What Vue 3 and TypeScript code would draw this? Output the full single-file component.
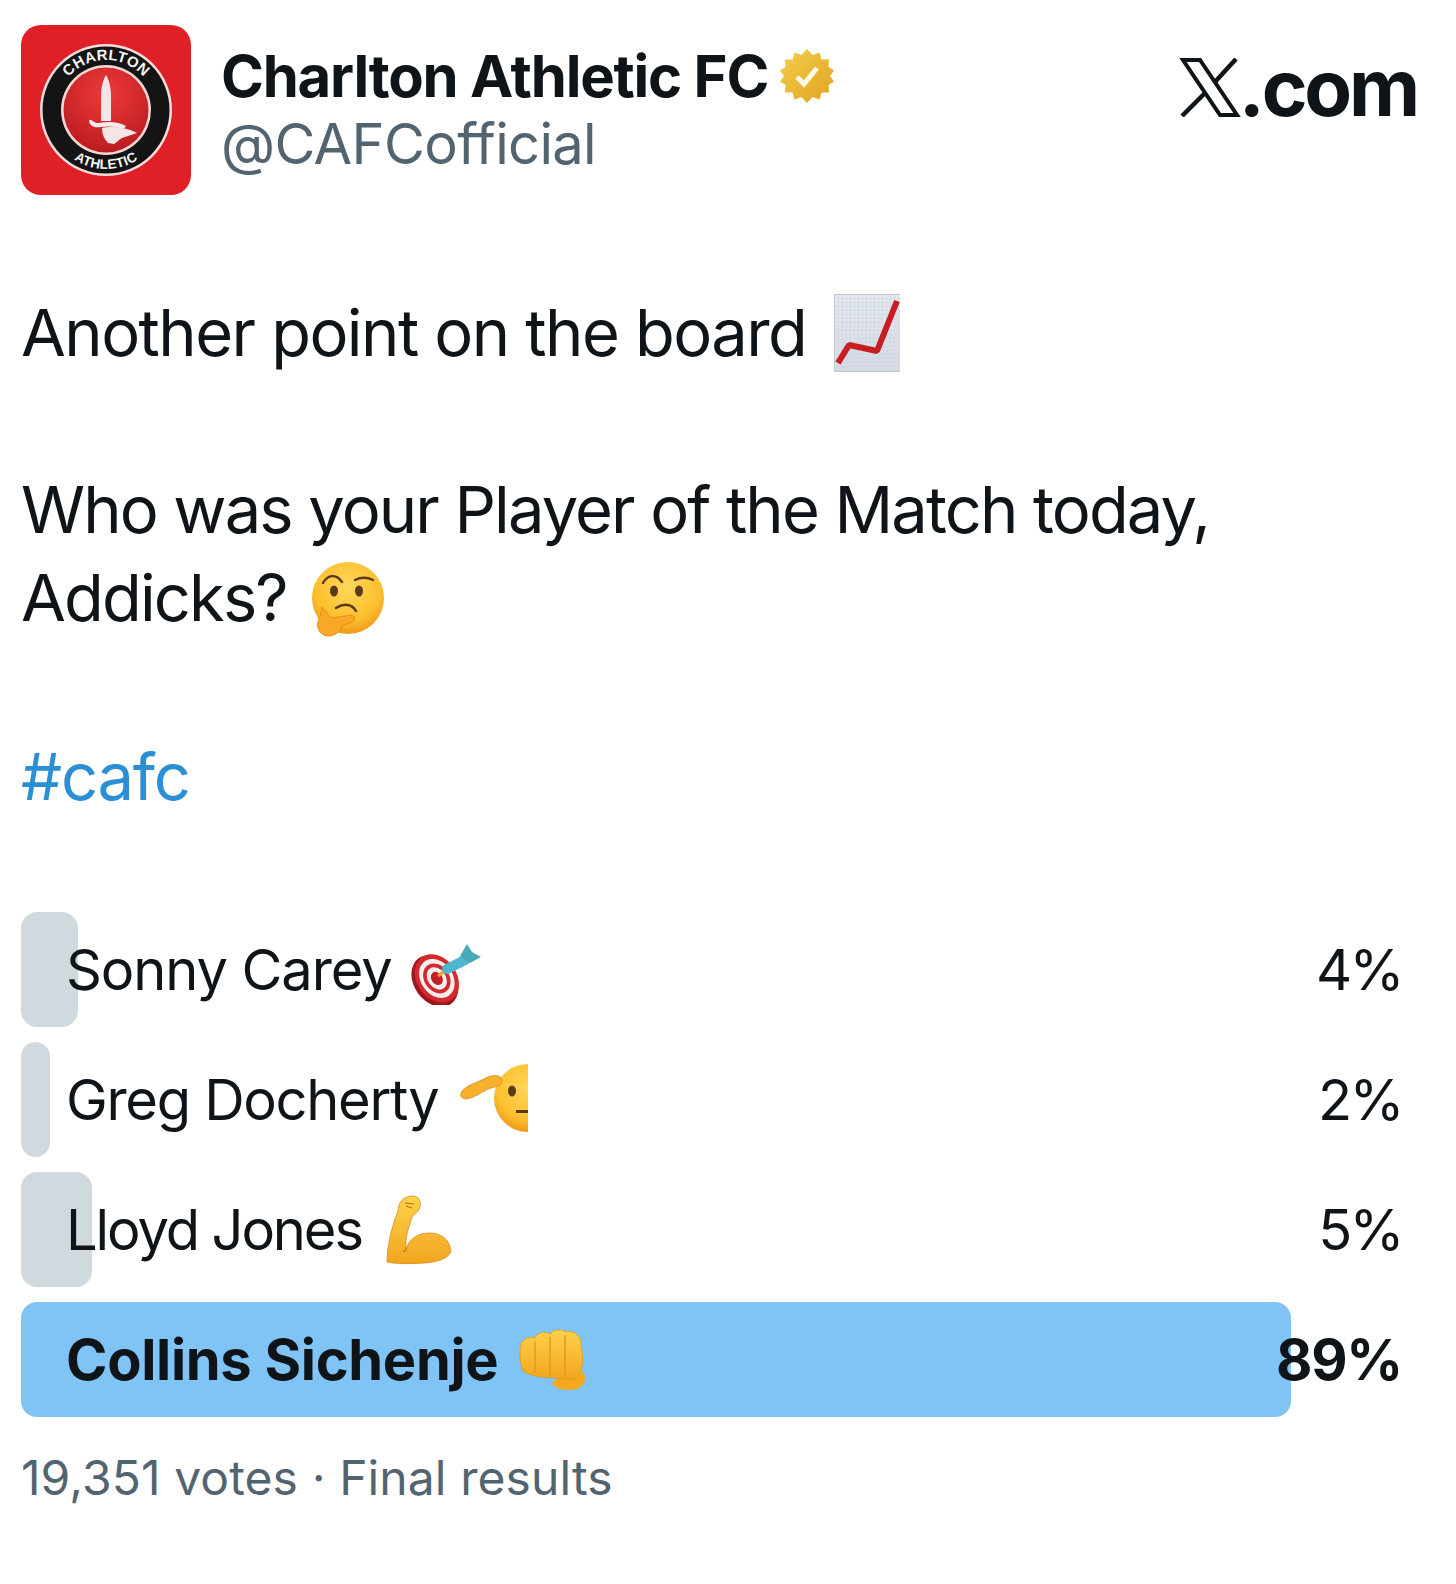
<script setup lang="ts">
interface Option { name: string; pct: string; width: number; icon: string; winner?: boolean }
const options: Option[] = [
  { name: 'Sonny Carey', pct: '4%', width: 57, icon: 'dart' },
  { name: 'Greg Docherty', pct: '2%', width: 29, icon: 'salute' },
  { name: 'Lloyd Jones', pct: '5%', width: 71, icon: 'bicep' },
  { name: 'Collins Sichenje', pct: '89%', width: 1270, icon: 'fist', winner: true },
]
</script>

<template>
  <main class="page">
    <svg class="defs" width="0" height="0" aria-hidden="true">
      <defs>
        <radialGradient id="skin" cx="50%" cy="35%" r="70%">
          <stop offset="0" stop-color="#ffd75a" />
          <stop offset="0.65" stop-color="#fdc02f" />
          <stop offset="1" stop-color="#ee8f14" />
        </radialGradient>
        <linearGradient id="arm" x1="0" y1="0" x2="0" y2="1">
          <stop offset="0" stop-color="#ffd24a" />
          <stop offset="1" stop-color="#f2a51e" />
        </linearGradient>
        <radialGradient id="crestRed" cx="50%" cy="30%" r="75%">
          <stop offset="0" stop-color="#ee3a3a" />
          <stop offset="1" stop-color="#b81a1e" />
        </radialGradient>
        <linearGradient id="gold" x1="0" y1="0" x2="1" y2="1">
          <stop offset="0" stop-color="#f3cf4f" />
          <stop offset="1" stop-color="#e0a21e" />
        </linearGradient>
        <linearGradient id="paper" x1="0" y1="0" x2="0" y2="1">
          <stop offset="0" stop-color="#e4e8ef" />
          <stop offset="1" stop-color="#d6dbe3" />
        </linearGradient>
        <pattern id="grid" width="4" height="4" patternUnits="userSpaceOnUse">
          <path d="M4 0H0V4" fill="none" stroke="#c6cedb" stroke-width="0.7" />
        </pattern>
      </defs>
    </svg>

    <header class="head">
      <svg class="avatar" viewBox="0 0 170 170" width="170" height="170" role="img" aria-label="Charlton Athletic crest">
        <rect width="170" height="170" rx="20" fill="#e02027" />
        <circle cx="85" cy="85" r="66" fill="#f6dcdc" />
        <circle cx="85" cy="85" r="63.5" fill="#141414" />
        <circle cx="85" cy="85" r="45" fill="#f3d6d6" />
        <circle cx="85" cy="85" r="42.5" fill="url(#crestRed)" />
        <path id="arcTop" d="M35 85A50 50 0 0 1 135 85" fill="none" />
        <path id="arcBot" d="M26 85A59 59 0 0 0 144 85" fill="none" />
        <text class="crest-text"><textPath href="#arcTop" startOffset="50%" text-anchor="middle">CHARLTON</textPath></text>
        <text class="crest-text small"><textPath href="#arcBot" startOffset="50%" text-anchor="middle">ATHLETIC</textPath></text>
        <path d="M85 50C88 55 90 62 90 72L90 96H80L80 72C80 62 82 55 85 50Z" fill="#f4e6e6" />
        <path d="M68 96C70 92 72 99 78 98C88 96 98 97 105 101L103 104C94 101 86 101 80 102C75 103 69 102 68 96Z" fill="#f7ecec" />
        <path d="M81 103C90 101 105 102 116 108L101 113L93 119L87 118C83 114 81 109 81 103Z" fill="#f4e6e6" />
      </svg>
      <div class="names">
        <div class="name-line">
          <span class="name">Charlton Athletic FC</span>
          <svg class="badge" viewBox="0 0 54 54" width="54" height="54" aria-hidden="true">
            <path d="M27 0L32.5 6 39.5 3.5 41.5 10.5 49 10.5 48.5 18 54 21.5 50 27 54 32.5 48.5 36 49 43.5 41.5 43.5 39.5 50.5 32.5 48 27 54 21.5 48 14.5 50.5 12.500 43.500 5 43.500 5.500 36 0 32.500 4 27 0 21.500 5.500 18 5 10.500 12.500 10.500 14.500 3.500 21.500 6Z" fill="url(#gold)" />
            <path d="M17 28L24 35 37 19" fill="none" stroke="#fff8e4" stroke-width="5" />
          </svg>
        </div>
        <div class="handle">@CAFCofficial</div>
      </div>
      <div class="brand">
        <svg class="x-logo" viewBox="0 0 62 59" width="62" height="59" aria-hidden="true">
          <path d="M4 2H21L58 57H41Z" fill="none" stroke="#0f1419" stroke-width="4" />
          <path d="M57 1L35 25M27 34L3 58" fill="none" stroke="#0f1419" stroke-width="4.500" />
        </svg>
        <span class="dotcom">.com</span>
      </div>
    </header>

    <section class="tweet">
      <p class="line first">Another point on the board<svg class="emo chart" viewBox="0 0 66 78" width="66" height="78" aria-hidden="true">
          <rect width="66" height="78" fill="url(#paper)" />
          <rect width="66" height="78" fill="url(#grid)" />
          <path d="M66 0H0V78H66" fill="none" stroke="#c4c9d1" stroke-width="2" />
          <path d="M4 69L15 51 43 57 63 7" fill="none" stroke="#c81e22" stroke-width="6" stroke-linejoin="bevel" />
        </svg></p>
      <p class="line second">Who was your Player of the Match today,</p>
      <p class="line third">Addicks?<svg class="emo think" viewBox="0 0 76 78" width="76" height="78" aria-hidden="true">
          <circle cx="39" cy="37" r="36" fill="url(#skin)" />
          <path d="M14 22C19 13 27 13 33 21" fill="none" stroke="#5a3a1a" stroke-width="2.500" stroke-linecap="round" />
          <path d="M46 19C52 16 58 16 64 19" fill="none" stroke="#5a3a1a" stroke-width="2.500" stroke-linecap="round" />
          <ellipse cx="25" cy="30" rx="4" ry="5.500" fill="#5a3a1a" />
          <ellipse cx="50" cy="30" rx="4" ry="5.500" fill="#5a3a1a" />
          <path d="M27 47C35 42 43 43 47 50" fill="none" stroke="#5a3a1a" stroke-width="2.500" stroke-linecap="round" />
          <path d="M13 46C17 49 19 54 22 57L42 54C46 54 47 59 43 61L33 65C32 72 22 77 15 74C8 71 7 62 11 56Z" fill="#f9a825" stroke="#ee8f14" stroke-width="1" />
        </svg></p>
      <p class="line tag">#cafc</p>
    </section>

    <section class="poll">
      <div v-for="o in options" :key="o.name" class="row" :class="[o.icon, { win: o.winner }]">
        <div class="bar" :style="{ width: o.width + 'px' }"></div>
        <div class="row-text">
          <span class="label">{{ o.name }}</span>
          <svg v-if="o.icon === 'dart'" class="emo dart-icon" viewBox="0 0 72 62" width="72" height="62" aria-hidden="true">
            <g transform="rotate(-35 26 36)">
              <ellipse cx="24" cy="37" rx="21" ry="28" fill="#9e161e" />
              <ellipse cx="27" cy="36" rx="20" ry="26" fill="#d42a2f" />
              <ellipse cx="27" cy="36" rx="16" ry="21" fill="#f7eeee" />
              <ellipse cx="27" cy="36" rx="12.500" ry="16" fill="#d42a2f" />
              <ellipse cx="27" cy="36" rx="9" ry="12" fill="#f7eeee" />
              <ellipse cx="27" cy="36" rx="5.500" ry="7" fill="#c41f25" />
            </g>
            <path d="M28 33L36 27" stroke="#f0a030" stroke-width="3" />
            <path d="M37 26L55 17" stroke="#4fb6cf" stroke-width="10" stroke-linecap="round" />
            <path d="M50 13L57 1 62 9 71 14 60 20Z" fill="#4aa9b8" />
          </svg>
          <svg v-else-if="o.icon === 'salute'" class="emo salute-icon" viewBox="0 0 68 68" width="68" height="68" aria-hidden="true">
            <circle cx="68" cy="34" r="34" fill="url(#skin)" />
            <path d="M1 29C4 22 16 19 26 14C33 10 42 11 42 17C42 22 34 23 28 25C20 29 14 34 6 35C2 35 0 32 1 29Z" fill="#f6b02c" stroke="#d88b18" stroke-width="0.800" />
            <ellipse cx="52" cy="27" rx="4" ry="5.500" fill="#5a3a1a" />
            <rect x="56" y="46" width="12" height="3" fill="#5a3a1a" />
          </svg>
          <svg v-else-if="o.icon === 'bicep'" class="emo bicep-icon" viewBox="0 0 66 70" width="66" height="70" aria-hidden="true">
            <path d="M12 16C12 7 18 1 27 1C35 1 36 11 32 16C29 20 26 20 25 25C23 33 19 41 20 53C25 42 33 38 44 38C56 38 64 46 65 56C63 63 53 67 38 68C25 69 10 69 1 67C1 55 4 36 12 16Z" fill="url(#arm)" stroke="#d88b18" stroke-width="0.800" />
            <path d="M20 53C20 55 19 57 17 56" fill="none" stroke="#c97f14" stroke-width="1.500" />
            <path d="M19 8L28 9M20 11L26 13" stroke="#b87514" stroke-width="1.200" />
          </svg>
          <svg v-else class="emo fist-icon" viewBox="0 0 68 62" width="68" height="62" aria-hidden="true">
            <path d="M37 50C45 50 54 52 64 42C68 50 66 56 58 60C48 62 38 61 33 55Z" fill="#f4a91f" />
            <path d="M2 16C3 9 12 7 16 9C18 3 27 2 31 5C34 0 44 0 47 3C55 1 62 7 62 15C64 26 65 38 60 46C55 52 47 51 38 49C25 49 11 47 4 42C1 34 0 24 2 16Z" fill="url(#arm)" stroke="#e09a1c" stroke-width="0.800" />
            <path d="M16 12V44M31 8V47M46 6V48" fill="none" stroke="#e39b1c" stroke-width="1.500" />
          </svg>
        </div>
        <span class="pct">{{ o.pct }}</span>
      </div>
    </section>

    <footer class="foot">19,351 votes · Final results</footer>
  </main>
</template>

<style scoped>
.page {
  width: 1456px;
  height: 1584px;
  box-sizing: border-box;
  padding: 25px 39px 0 21px;
  background: #fff;
  color: #0f1419;
  font-family: Inter, "Liberation Sans", sans-serif;
  overflow: hidden;
}
.defs { position: absolute; }
.head { display: flex; align-items: flex-start; }
.avatar { flex: none; display: block; }
.names { margin-left: 30px; margin-top: 17px; }
.name-line { display: flex; align-items: center; gap: 12px; height: 68px; }
.name { font-size: 58px; font-weight: 700; letter-spacing: -1.2px; line-height: 68px; }
.badge { flex: none; }
.handle { font-size: 56px; line-height: 68px; color: #536471; letter-spacing: -0.65px; }
.brand { margin-left: auto; margin-top: 33px; display: flex; align-items: flex-end; gap: 0; }
.x-logo { display: block; margin-right: -2px; }
.dotcom { font-size: 78px; line-height: 59px; font-weight: 700; letter-spacing: -3.2px; }
.crest-text { font: 700 15px "Liberation Sans", sans-serif; fill: #f3f3f3; letter-spacing: 0.3px; }
.crest-text.small { font-size: 13.5px; }
.tweet { margin-top: 94px; }
.line { margin: 0; font-size: 65px; line-height: 88px; letter-spacing: -1.85px; white-space: nowrap; display: flex; align-items: center; }
.first { letter-spacing: -1.55px; }
.second { margin-top: 89px; }
.tag { margin-top: 91px; color: #2b8fd6; letter-spacing: -1.2px; }
.emo { flex: none; display: block; }
.chart { margin-left: 28px; margin-top: 0; }
.think { margin-left: 22px; margin-top: 4px; }
.poll { margin-top: 91px; display: flex; flex-direction: column; gap: 15px; }
.row { display: grid; grid-template-columns: 1fr auto; align-items: center; height: 115px; width: 1381px; }
.bar { grid-area: 1 / 1 / 2 / 3; height: 115px; background: #cfd9de; border-radius: 16px; }
.row-text { grid-area: 1 / 1; z-index: 1; display: flex; align-items: center; padding-left: 45px; gap: 17px; }
.label { font-size: 56px; letter-spacing: -1.3px; }
.dart .label { letter-spacing: -1.1px; }
.bicep .label { letter-spacing: -2.1px; }
.pct { grid-area: 1 / 2; z-index: 1; font-size: 56px; letter-spacing: -2.6px; }
.dart-icon { margin-left: 1px; margin-top: 8px; }
.salute-icon { margin-left: 5px; margin-top: -4px; }
.bicep-icon { margin-left: 7px; }
.fist-icon { margin-left: 4px; }
.win .bar { background: #7fc4f5; }
.win .label { font-weight: 700; letter-spacing: -0.3px; }
.win .pct { font-weight: 700; letter-spacing: -1.2px; }
.foot { margin-top: 31px; font-size: 48px; line-height: 60px; color: #536471; letter-spacing: 0.1px; }
</style>
